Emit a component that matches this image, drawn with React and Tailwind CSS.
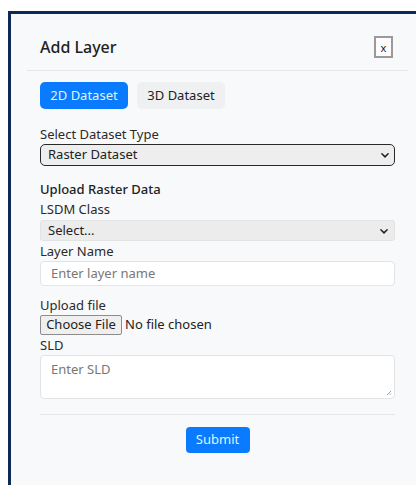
import React, { useState } from "react";

const font = { fontFamily: '"Noto Sans", "Open Sans", sans-serif' };

const Chevron = () => (
  <svg width="10" height="10" viewBox="0 0 16 16" className="shrink-0">
    <path d="M3 6l5 5 5-5" fill="none" stroke="#222" strokeWidth="2.4" strokeLinecap="round" strokeLinejoin="round" />
  </svg>
);

const Label = ({ children, className = "" }) => (
  <div className={`text-[13px] leading-[20px] text-[#2a2a2a] ${className}`}>{children}</div>
);

export default function App() {
  const [tab, setTab] = useState("2d");

  return (
    <div className="h-[485px] w-[416px] overflow-hidden bg-white pt-[11px] pl-[8px]" style={font}>
      <div className="h-[480px] border-l-[3px] border-t-[3px] border-[#0e2a57] bg-[#f8f9fa] pr-[8px]">
        <div className="ml-[16px]">
          {/* Header */}
          <div className="flex items-center justify-between border-b border-[#e6e7e9] pt-[21px] pb-[11px] pl-[13px] pr-[15px]">
            <h2 className="text-[16px] font-medium text-[#222]">Add Layer</h2>
            <button className="flex h-[22px] w-[19px] items-center justify-center border-2 border-[#9a9a9a] bg-white text-[11px] leading-none text-[#222]">
              x
            </button>
          </div>

          <div className="px-[13px]">
            {/* Dataset tabs */}
            <div className="mt-[11px] flex gap-[9px]">
              <button
                onClick={() => setTab("2d")}
                className={`h-[27px] w-[88px] rounded-[5px] text-[13px] ${
                  tab === "2d" ? "bg-[#0a7bff] text-[#dff4ff]" : "bg-[#eff0f2] text-[#222]"
                }`}
              >
                2D Dataset
              </button>
              <button
                onClick={() => setTab("3d")}
                className={`h-[27px] w-[88px] rounded-[5px] text-[13px] ${
                  tab === "3d" ? "bg-[#0a7bff] text-[#dff4ff]" : "bg-[#eff0f2] text-[#222]"
                }`}
              >
                3D Dataset
              </button>
            </div>

            <Label className="mt-[15px]">Select Dataset Type</Label>
            <div className="flex h-[22px] items-center justify-between rounded-[5px] border-[1.5px] border-[#2a2a2a] bg-[#eeeeee] pl-[7px] pr-[4px] text-[13px] text-[#222]">
              <span>Raster Dataset</span>
              <Chevron />
            </div>

            <div className="mt-[13px] text-[13px] font-medium leading-[20px] text-[#222]">Upload Raster Data</div>
            <Label className="leading-[21px]">LSDM Class</Label>
            <div className="flex h-[21px] items-center justify-between rounded-[3px] border border-[#e2e3e5] bg-[#ececec] pl-[7px] pr-[5px] text-[13px] text-[#222]">
              <span>Select...</span>
              <Chevron />
            </div>

            <Label className="leading-[19px]">Layer Name</Label>
            <div className="flex h-[25px] items-center rounded-[4px] border border-[#e3e4e6] bg-white pl-[10px] text-[13px] text-[#777]">
              Enter layer name
            </div>

            <Label className="mt-[9px]">Upload file</Label>
            <div className="flex items-center gap-[3px] text-[13px] text-[#222]">
              <span className="flex h-[20px] w-[82px] items-center justify-center rounded-[2px] border border-[#8d8d8d] bg-[#efefef]">
                Choose File
              </span>
              <span>No file chosen</span>
            </div>
            <Label className="leading-[17px]">SLD</Label>
            <div className="relative h-[44px] rounded-[4px] border border-[#e3e4e6] bg-white pl-[10px] pt-[4px] text-[13px] text-[#777]">
              Enter SLD
              <svg width="6" height="6" viewBox="0 0 6 6" className="absolute right-[2px] bottom-[2px]">
                <path d="M1 5L5 1M3.5 5L5 3.5" stroke="#888" strokeWidth="0.8" />
              </svg>
            </div>

            <div className="mt-[15px] border-t border-[#e6e7e9]" />
            <div className="mt-[12px] flex justify-center">
              <button className="h-[26px] w-[64px] rounded-[4px] bg-[#0a7bff] text-[13px] text-[#dff4ff]">Submit</button>
            </div>
          </div>
        </div>
      </div>
    </div>
  );
}
